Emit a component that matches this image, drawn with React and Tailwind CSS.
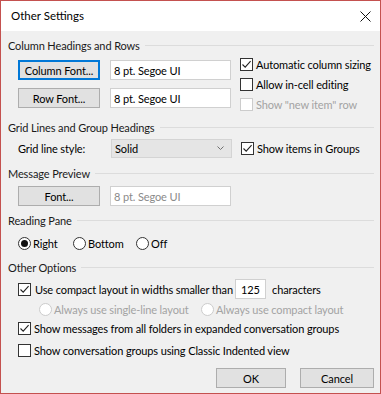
import React from "react";

const font = { fontFamily: "Lato, 'Liberation Sans', sans-serif" };

const Heading = ({ children, className = "" }) => (
  <div className={`flex items-center h-[16px] ${className}`}>
    <span className="whitespace-nowrap text-[#1a1a1a]">{children}</span>
    <div className="flex-1 h-px bg-[#dcdcdc] ml-[5px]" />
  </div>
);

const Check = ({ checked, disabled }) => (
  <span
    className={`w-[13px] h-[13px] shrink-0 border bg-white flex items-center justify-center ${
      disabled ? "border-[#cccccc]" : "border-[#333333]"
    }`}
  >
    {checked && (
      <svg width="11" height="11" viewBox="0 0 11 11">
        <path d="M1.5 5.5 L4.2 8.2 L9.6 2.2" fill="none" stroke="#222" strokeWidth="1.1" />
      </svg>
    )}
  </span>
);

const Radio = ({ checked, disabled }) => (
  <span
    className={`w-[13px] h-[13px] shrink-0 rounded-full border bg-white flex items-center justify-center ${
      disabled ? "border-[#cccccc]" : "border-[#333333]"
    }`}
  >
    {checked && <span className="w-[7px] h-[7px] rounded-full bg-[#111]" />}
  </span>
);

const Btn = ({ children, focused, className = "" }) => (
  <button
    className={`h-[20px] bg-[#e1e1e1] text-black flex items-center justify-center ${
      focused ? "border-2 border-[#0078d7]" : "border border-[#adadad]"
    } ${className}`}
  >
    {children}
  </button>
);

const TextBox = ({ value, disabled, className = "" }) => (
  <div
    className={`h-[20px] bg-white border border-[#d0d0d0] flex items-center pl-[3px] ${
      disabled ? "text-[#8a8a8a]" : "text-black"
    } ${className}`}
  >
    {value}
  </div>
);

const CheckRow = ({ checked, disabled, label, className = "" }) => (
  <div className={`flex items-center h-[20px] ${className}`}>
    <Check checked={checked} disabled={disabled} />
    <span className={`ml-[3px] whitespace-nowrap ${disabled ? "text-[#a3a3a3]" : "text-black"}`}>{label}</span>
  </div>
);

export default function App() {
  return (
    <div
      style={font}
      className="w-[381px] h-[394px] border border-[#c4514f] flex flex-col text-[11px] tracking-[-0.12px] leading-none overflow-hidden"
    >
      {/* title bar */}
      <div className="h-[30px] bg-white flex items-center justify-between pl-[10px] pr-[9px] shrink-0">
        <span className="text-black text-[11.5px] tracking-normal">Other Settings</span>
        <svg width="11" height="11" viewBox="0 0 11 11">
          <path d="M0.5 0.5 L10.5 10.5 M10.5 0.5 L0.5 10.5" stroke="#111" strokeWidth="1" />
        </svg>
      </div>

      <div className="flex-1 bg-[#f0f0f0] pl-[7px] pr-[6px] flex flex-col">
        <Heading className="mt-[6px]">Column Headings and Rows</Heading>
        <div className="flex mt-[1px]">
          <div className="flex flex-col ml-[10px] mt-[6px] gap-[8px]">
            <div className="flex items-center">
              <Btn focused className="w-[82px]">Column Font...</Btn>
              <TextBox value="8 pt. Segoe UI" className="w-[121px] ml-[10px]" />
            </div>
            <div className="flex items-center">
              <Btn className="w-[82px]">Row Font...</Btn>
              <TextBox value="8 pt. Segoe UI" className="w-[121px] ml-[10px]" />
            </div>
          </div>
          <div className="flex flex-col ml-[9px]">
            <CheckRow checked label="Automatic column sizing" />
            <CheckRow label="Allow in-cell editing" />
            <CheckRow disabled label={'Show "new item" row'} />
          </div>
        </div>

        <Heading className="mt-[5px]">Grid Lines and Group Headings</Heading>
        <div className="flex items-center h-[20px] mt-[3px]">
          <span className="w-[93px] ml-[10px] text-black">Grid line style:</span>
          <div className="w-[121px] h-[19px] bg-[#e5e5e5] border border-[#d4d4d4] flex items-center justify-between pl-[3px] pr-[7px]">
            <span>Solid</span>
            <svg width="7" height="4" viewBox="0 0 7 4">
              <path d="M0.5 0.5 L3.5 3.5 L6.5 0.5" fill="none" stroke="#707070" strokeWidth="1" />
            </svg>
          </div>
          <CheckRow checked label="Show items in Groups" className="ml-[9px]" />
        </div>

        <Heading className="mt-[7px]">Message Preview</Heading>
        <div className="flex items-center mt-[5px] ml-[10px]">
          <Btn className="w-[82px]">Font...</Btn>
          <TextBox disabled value="8 pt. Segoe UI" className="w-[121px] ml-[10px] h-[19px]" />
        </div>

        <Heading className="mt-[6px]">Reading Pane</Heading>
        <div className="flex items-center h-[20px] mt-[5px] ml-[10px]">
          <div className="flex items-center w-[55px]">
            <Radio checked />
            <span className="ml-[2px]">Right</span>
          </div>
          <div className="flex items-center w-[63px]">
            <Radio />
            <span className="ml-[2px]">Bottom</span>
          </div>
          <div className="flex items-center">
            <Radio />
            <span className="ml-[2px]">Off</span>
          </div>
        </div>

        <Heading className="mt-[6px]">Other Options</Heading>
        <div className="flex items-center h-[18px] mt-[5px] ml-[10px]">
          <Check checked />
          <span className="ml-[4px] w-[200px] whitespace-nowrap">Use compact layout in widths smaller than</span>
          <TextBox value="125" className="w-[31px] h-[19px] pl-[5px]" />
          <span className="ml-[6px]">characters</span>
        </div>
        <div className="flex items-center h-[18px] mt-[2px] ml-[31px] text-[#a3a3a3]">
          <div className="flex items-center w-[162px]">
            <Radio disabled />
            <span className="ml-[2px] whitespace-nowrap">Always use single-line layout</span>
          </div>
          <div className="flex items-center">
            <Radio disabled />
            <span className="ml-[2px] whitespace-nowrap">Always use compact layout</span>
          </div>
        </div>
        <CheckRow
          checked
          label="Show messages from all folders in expanded conversation groups"
          className="h-[18px] ml-[10px]"
        />
        <CheckRow
          label="Show conversation groups using Classic Indented view"
          className="h-[18px] mt-[2px] ml-[10px]"
        />

        <div className="flex justify-end gap-[14px] mt-[8px]">
          <Btn className="w-[70px]">OK</Btn>
          <Btn className="w-[74px]">Cancel</Btn>
        </div>
      </div>
    </div>
  );
}
